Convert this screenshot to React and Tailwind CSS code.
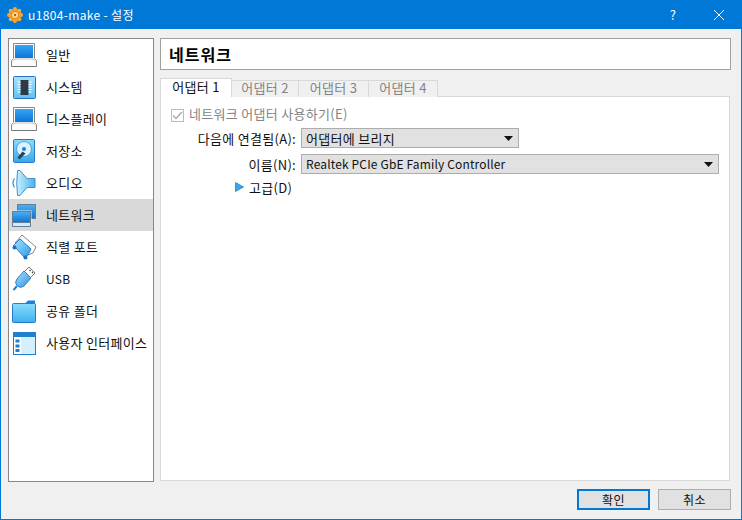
import React from "react";

const Mon = () => (
  <svg width="26" height="24" viewBox="0 0 26 24">
    <defs><linearGradient id="m" x1="0" y1="0" x2="0" y2="1"><stop offset="0" stopColor="#35a6f2" /><stop offset="1" stopColor="#0a74d6" /></linearGradient></defs>
    <path d="M2.500 0.500h21v15l2 2v6H.5v-6l2-2z" fill="#fbfbfb" stroke="#858585" />
    <rect x="4" y="2" width="18" height="13" fill="url(#m)" />
    <path d="M4 16h18l2 2.500M4 16l-2 2.500" fill="none" stroke="#c4c4c4" />
    <path d="M1 23.500h24" stroke="#777" />
  </svg>
);
const Chip = () => (
  <svg width="23" height="23" viewBox="0 0 23 23">
    <defs><linearGradient id="c" x1="0" y1="0" x2="0" y2="1"><stop offset="0" stopColor="#a9e2fb" /><stop offset="1" stopColor="#5cc3f5" /></linearGradient></defs>
    <rect x="0.500" y="0.500" width="22" height="22" rx="1" fill="url(#c)" stroke="#2a6fc0" />
    <rect x="7.500" y="4" width="8" height="15" fill="#2f3a46" />
    <path d="M4.500 6h3M4.500 8.500h3M4.500 11h3M4.500 13.500h3M4.500 16h3M15.500 6h3M15.500 8.500h3M15.500 11h3M15.500 13.500h3M15.500 16h3" stroke="#fff" />
  </svg>
);
const Disk = () => (
  <svg width="22" height="24" viewBox="0 0 22 24">
    <defs><linearGradient id="d" x1="0" y1="0" x2="0" y2="1"><stop offset="0" stopColor="#8fdcfb" /><stop offset="1" stopColor="#3aa6ea" /></linearGradient></defs>
    <rect x="0.500" y="0.500" width="21" height="23" rx="1.500" fill="url(#d)" stroke="#2a7cc8" />
    <circle cx="11" cy="10" r="7.500" fill="#d8f3fd" stroke="#4aa5dc" />
    <circle cx="11" cy="10" r="2" fill="#2f7cc0" />
    <path d="M9.500 12.500l-5 6 2 2 6-6z" fill="#26445f" />
  </svg>
);
const Audio = () => (
  <svg width="24" height="26" viewBox="0 0 24 26">
    <defs><linearGradient id="a" x1="0" y1="0" x2="1" y2="0"><stop offset="0" stopColor="#c9f0fc" /><stop offset="1" stopColor="#4cb0ec" /></linearGradient></defs>
    <path d="M5.500 .5h2.500l7 8h8v9h-8l-7 8H5.500q-1.500-12 0-25z" fill="url(#a)" stroke="#3f90d2" />
    <path d="M2.500 8.500q-3 4.500 0 9" fill="none" stroke="#3f90d2" strokeWidth="1.300" />
  </svg>
);
const Net = () => (
  <svg width="24" height="23" viewBox="0 0 24 23">
    <defs><linearGradient id="n" x1="0" y1="0" x2="0" y2="1"><stop offset="0" stopColor="#4fb0f0" /><stop offset="1" stopColor="#0d74d4" /></linearGradient></defs>
    <rect x="5.500" y="0.500" width="18" height="14" fill="url(#n)" stroke="#5f7f9a" />
    <rect x="0.500" y="7.500" width="18" height="11" fill="url(#n)" stroke="#e8f0f6" strokeWidth="2" />
    <rect x="0.500" y="7.500" width="18" height="11" fill="url(#n)" stroke="#5f7f9a" />
    <path d="M.5 18.500h18v4H.5z" fill="#d8e8f4" stroke="#5f7f9a" />
  </svg>
);
const Serial = () => (
  <svg width="25" height="26" viewBox="0 0 25 26">
    <defs><linearGradient id="s" x1="0" y1="0" x2="1" y2="1"><stop offset="0" stopColor="#a8e4fb" /><stop offset="1" stopColor="#2f9ae6" /></linearGradient></defs>
    <path d="M10 1l14 12-3 6-5 2L3 9z" fill="#fff" stroke="#858585" />
    <path d="M8 5l11 10-3 6-4 2L3 13l-2-1z" fill="url(#s)" stroke="#2a7cc8" />
    <circle cx="2.500" cy="13.500" r="2" fill="#1f6fc0" />
    <circle cx="13.500" cy="23.500" r="2" fill="#1f6fc0" />
  </svg>
);
const Usb = () => (
  <svg width="24" height="26" viewBox="0 0 24 26">
    <defs><linearGradient id="u" x1="0" y1="0" x2="1" y2="1"><stop offset="0" stopColor="#a8e4fb" /><stop offset="1" stopColor="#2f8fe2" /></linearGradient></defs>
    <path d="M17 1l6 6-5 5-6-6z" fill="#fff" stroke="#777" />
    <path d="M17.500 4l1 1M20 6l1 1" stroke="#444" strokeWidth="1.300" />
    <path d="M12 5l7 7-7 8q-3 2-5 1l-3-3q-1-2 1-5z" fill="url(#u)" stroke="#2a7cc8" />
    <path d="M5 20l-3.500 4" stroke="#2a7cc8" strokeWidth="2" />
  </svg>
);
const Folder = () => (
  <svg width="24" height="23" viewBox="0 0 24 23">
    <defs><linearGradient id="f" x1="0" y1="0" x2="0" y2="1"><stop offset="0" stopColor="#8adcfb" /><stop offset="1" stopColor="#3db0f0" /></linearGradient></defs>
    <path d="M0.500 3.500H13l3-3h7v3z" fill="#1f7fd0" />
    <rect x="0.500" y="3.500" width="23" height="19" rx="1" fill="url(#f)" stroke="#2a7cc8" />
  </svg>
);
const Ui = () => (
  <svg width="23" height="23" viewBox="0 0 23 23">
    <rect x="0.500" y="0.500" width="22" height="22" fill="#d4f0fc" stroke="#1f7fd0" />
    <rect x="1" y="1" width="21" height="4" fill="#1f7fd0" />
    <rect x="1" y="5" width="7" height="17" fill="#fff" />
    <rect x="2.500" y="7.500" width="4" height="3" fill="#1f7fd0" />
    <rect x="2.500" y="12.500" width="4" height="3" fill="#1f7fd0" />
    <rect x="2.500" y="17" width="4" height="3" fill="#1f7fd0" />
  </svg>
);

const items = [
  ["일반", <Mon />],
  ["시스템", <Chip />],
  ["디스플레이", <Mon />],
  ["저장소", <Disk />],
  ["오디오", <Audio />],
  ["네트워크", <Net />, true],
  ["직렬 포트", <Serial />],
  ["USB", <Usb />],
  ["공유 폴더", <Folder />],
  ["사용자 인터페이스", <Ui />],
];

const Caret = () => (
  <svg width="9" height="5" viewBox="0 0 9 5" className="shrink-0"><path d="M0 0h9L4.500 5z" fill="#111" /></svg>
);

const Combo = ({ className, children }) => (
  <div className={`h-[20px] bg-[#e1e1e1] border border-[#adadad] flex items-center justify-between pl-[4px] pr-[5px] text-[#111] ${className}`}>
    <span>{children}</span>
    <Caret />
  </div>
);

export default function App() {
  return (
    <div className="w-[742px] h-[520px] flex flex-col bg-[#f0f0f0] border-x border-b border-[#0078d7] text-[13px] tracking-[0.3px] leading-none text-[#111] overflow-hidden" style={{ fontFamily: '"Noto Sans CJK KR", "Noto Sans", sans-serif' }}>
      <div className="h-[29px] -mx-px shrink-0 bg-[#0078d7] flex items-center pl-[7px] text-white text-[12px]">
        <svg width="16" height="16" viewBox="0 0 16 16" className="shrink-0">
          <circle cx="8" cy="8" r="6.500" fill="#e88a1c" />
          <g fill="#f3a93a">
            <circle cx="8" cy="2" r="2" /><circle cx="8" cy="14" r="2" /><circle cx="2" cy="8" r="2" /><circle cx="14" cy="8" r="2" />
            <circle cx="3.700" cy="3.700" r="2" /><circle cx="12.300" cy="3.700" r="2" /><circle cx="3.700" cy="12.300" r="2" /><circle cx="12.300" cy="12.300" r="2" />
          </g>
          <circle cx="8" cy="8" r="3" fill="#fbe08a" /><circle cx="8" cy="8" r="1.200" fill="#c4580e" />
        </svg>
        <span className="ml-[5px] tracking-[0.35px]">u1804-make - 설정</span>
        <span className="ml-auto w-[46px] text-center text-[13px]">?</span>
        <div className="w-[46px] flex justify-center pr-[1px]">
          <svg width="10" height="10" viewBox="0 0 10 10"><path d="M0 0l10 10M10 0L0 10" stroke="#fff" strokeWidth="1" /></svg>
        </div>
      </div>

      <div className="flex-1 flex flex-col pl-[7px] pr-[10px] pt-[9px]">
        <div className="flex gap-[6px] h-[444px]">
          <div className="w-[146px] bg-white border border-[#828790] flex flex-col">
            {items.map(([label, icon, sel]) => (
              <div key={label} className={`h-[32px] shrink-0 flex items-center ${sel ? "bg-[#d9d9d9]" : ""}`}>
                <div className="w-[30px] flex justify-center items-center shrink-0">{icon}</div>
                <span className={`ml-[7px] whitespace-nowrap ${label === "USB" ? "text-[12px]" : "pb-[2px]"}`}>{label}</span>
              </div>
            ))}
          </div>
          <div className="w-[571px] flex flex-col pb-[1px]">
            <div className="h-[32px] shrink-0 bg-white border border-[#a0a0a0] flex items-center pl-[8px] text-[16px] tracking-[1px] font-bold text-black">네트워크</div>
            <div className="flex h-[19px] mt-[8px] shrink-0 relative z-10 items-end">
              <div className="w-[72px] h-[19px] pb-[4px] bg-white border-x border-t border-[#d9d9d9] flex items-center justify-center">어댑터 1</div>
              {[["어댑터 2", "w-[67px]"], ["어댑터 3", "w-[70px]"], ["어댑터 4", "w-[69px]"]].map(([t, w]) => (
                <div key={t} className={`${w} h-[17px] pb-[4px] bg-[#f0f0f0] border-r border-t border-[#d9d9d9] flex items-center justify-center text-[#838383]`}>{t}</div>
              ))}
            </div>
            <div className="flex-1 -mt-px bg-white border border-[#d9d9d9] w-[570px] pt-[11px] pl-[10px]">
              <div className="flex items-center h-[14px] text-[#838383]">
                <span className="w-[13px] h-[13px] border border-[#bcbcbc] flex items-center justify-center shrink-0">
                  <svg width="11" height="9" viewBox="0 0 11 9"><path d="M1 4.500l3 3 6-6.500" fill="none" stroke="#a8a8a8" strokeWidth="1.400" /></svg>
                </span>
                <span className="ml-[5px] pb-[3px]">네트워크 어댑터 사용하기(E)</span>
              </div>
              <div className="flex items-center mt-[6px]">
                <span className="w-[125px] text-right whitespace-nowrap">다음에 연결됨(A):</span>
                <Combo className="ml-[5px] w-[218px]">어댑터에 브리지</Combo>
              </div>
              <div className="flex items-center mt-[6px]">
                <span className="w-[125px] text-right whitespace-nowrap">이름(N):</span>
                <Combo className="ml-[5px] w-[418px]"><span className="block text-[12px] tracking-[0.15px]">Realtek PCIe GbE Family Controller</span></Combo>
              </div>
              <div className="flex items-center mt-[6px] h-[14px] pl-[64px]">
                <svg width="9" height="10" viewBox="0 0 9 10"><path d="M0.500 0.500L8.500 5 0.500 9.500z" fill="#3ea6ea" stroke="#2a7cc8" strokeWidth=".8" /></svg>
                <span className="ml-[5px]">고급(D)</span>
              </div>
            </div>
          </div>
        </div>
        <div className="flex justify-end gap-[8px] mt-[7px]">
          <button className="w-[73px] h-[21px] bg-[#e1e1e1] border-2 border-[#0078d7] flex items-center justify-center text-[12px] tracking-[0.5px] leading-none">확인</button>
          <button className="w-[73px] h-[21px] bg-[#e1e1e1] border border-[#adadad] flex items-center justify-center text-[12px] tracking-[0.5px] leading-none">취소</button>
        </div>
      </div>
    </div>
  );
}
